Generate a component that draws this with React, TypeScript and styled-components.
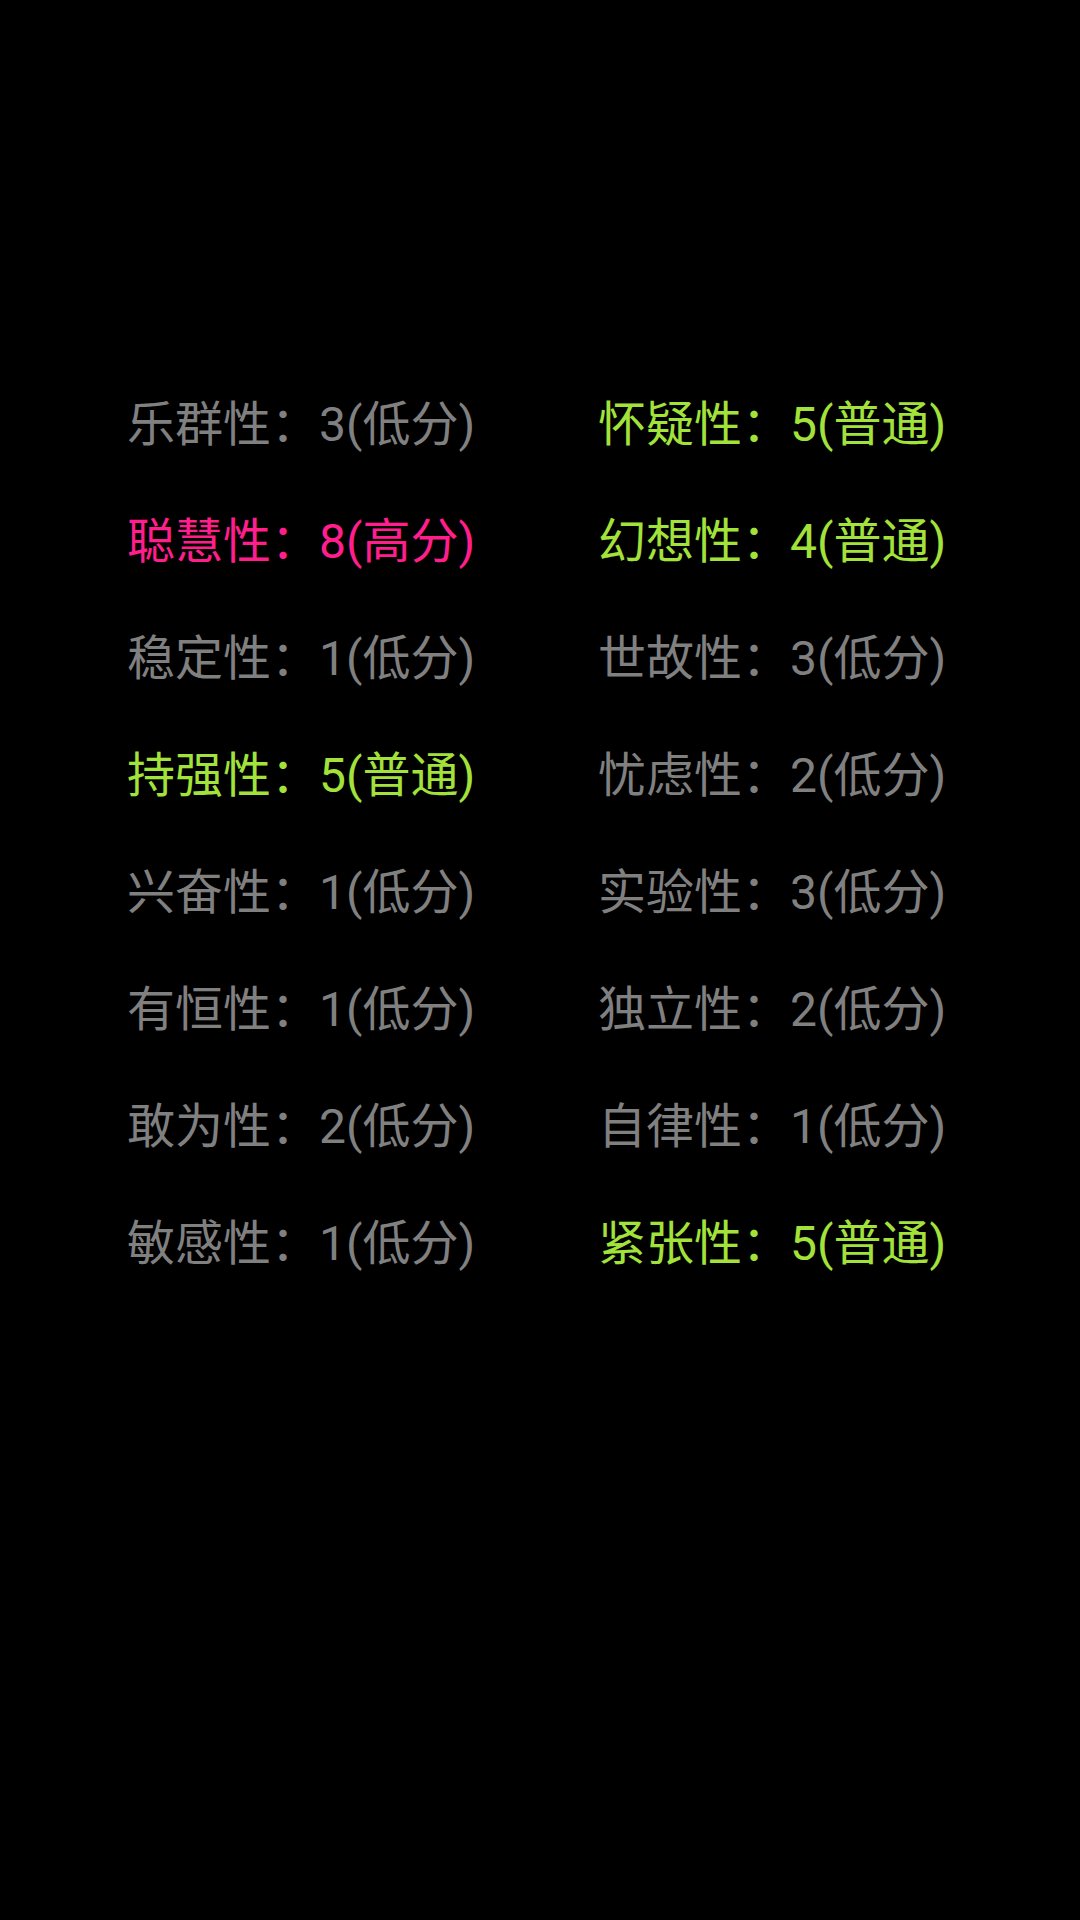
import React from "react";
import styled, { createGlobalStyle } from "styled-components";

const Global = createGlobalStyle`
  html, body { margin: 0; padding: 0; background: #000; }
  body { font-family: Roboto, "Noto Sans CJK SC", "Noto Sans", sans-serif; }
`;

const Page = styled.div`
  width: 1080px;
  height: 1920px;
  background: #000;
  box-sizing: border-box;
  padding: 366px 0 0 127px;
`;

const Grid = styled.div`
  display: grid;
  grid-template-columns: 471px auto;
  grid-auto-rows: 117px;
`;

type Level = "low" | "normal" | "high";

const colors: Record<Level, string> = {
  low: "#808080",
  normal: "#a2e23a",
  high: "#ff1e8c",
};

const Item = styled.div<{ $level: Level }>`
  font-family: Roboto, "Noto Sans CJK SC", sans-serif;
  font-size: 48px;
  font-weight: 400;
  line-height: 117px;
  color: ${(p) => colors[p.$level]};
  white-space: nowrap;
`;

const left: [string, number, Level][] = [
  ["乐群性", 3, "low"],
  ["聪慧性", 8, "high"],
  ["稳定性", 1, "low"],
  ["持强性", 5, "normal"],
  ["兴奋性", 1, "low"],
  ["有恒性", 1, "low"],
  ["敢为性", 2, "low"],
  ["敏感性", 1, "low"],
];

const right: [string, number, Level][] = [
  ["怀疑性", 5, "normal"],
  ["幻想性", 4, "normal"],
  ["世故性", 3, "low"],
  ["忧虑性", 2, "low"],
  ["实验性", 3, "low"],
  ["独立性", 2, "low"],
  ["自律性", 1, "low"],
  ["紧张性", 5, "normal"],
];

const label: Record<Level, string> = { low: "低分", normal: "普通", high: "高分" };

export default function App() {
  const cells: React.ReactNode[] = [];
  left.forEach((l, i) => {
    const r = right[i];
    cells.push(
      <Item key={`l${i}`} $level={l[2]}>
        {l[0]}：{l[1]}({label[l[2]]})
      </Item>
    );
    cells.push(
      <Item key={`r${i}`} $level={r[2]}>
        {r[0]}：{r[1]}({label[r[2]]})
      </Item>
    );
  });
  return (
    <>
      <Global />
      <Page>
        <Grid>{cells}</Grid>
      </Page>
    </>
  );
}
